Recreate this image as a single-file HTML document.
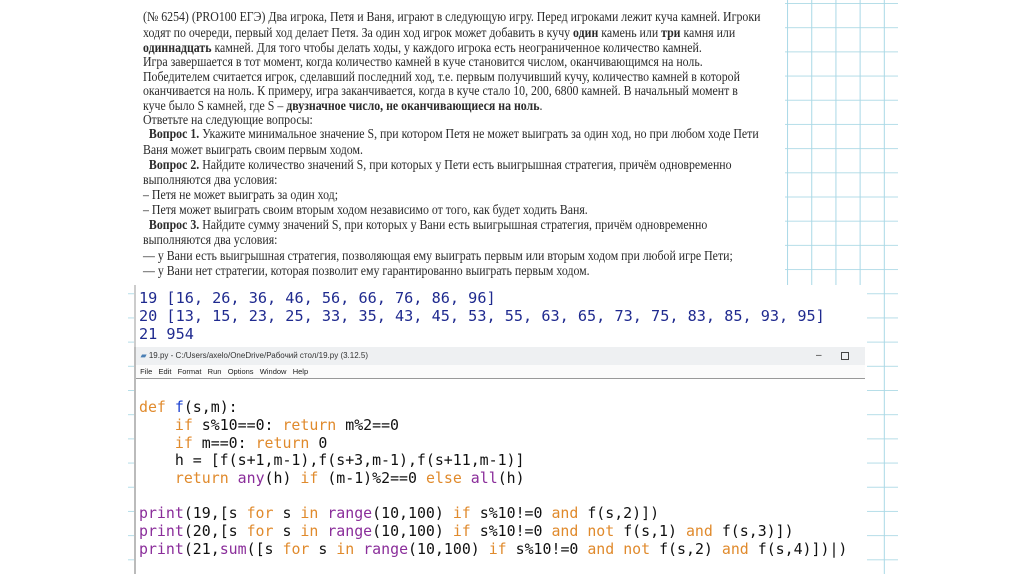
<!DOCTYPE html>
<html><head><meta charset="utf-8"><style>
body{margin:0;width:1024px;height:574px;background:#fff;position:relative;overflow:hidden;font-family:"Liberation Serif","DejaVu Serif",serif}
.grid{position:absolute;left:128px;top:0;width:770px;height:574px;
background-image:linear-gradient(to right,#a9d8e6 1px,transparent 1px),linear-gradient(to bottom,#b5dde8 1px,transparent 1px);
background-size:24.2px 24.2px;background-position:6px 3px}
.doc{position:absolute;left:128px;top:0;width:657px;height:285px;background:#fff}
.l{position:absolute;left:143px;font-size:13.4px;color:#2a2a2a;white-space:nowrap;line-height:15px;transform:scaleX(0.885);transform-origin:0 0}
.shell{position:absolute;left:134px;top:285px;width:731px;height:62px;background:#fff;border-left:2px solid #ccc}
.sh{position:absolute;left:139px;font-family:"DejaVu Sans Mono","Liberation Mono",monospace;font-size:15.2px;color:#1f2a8f;white-space:nowrap;line-height:18px}
.win{position:absolute;left:134px;top:347px;width:731px;height:227px;background:#fff;border-left:2px solid #bbb}
.tb{position:absolute;left:0;top:0;width:729px;height:18px;background:#eef0f2;font-family:"Liberation Sans",sans-serif;font-size:8px;color:#333;line-height:18px}
.mb{position:absolute;left:0;top:18px;width:729px;height:13px;font-family:"Liberation Sans",sans-serif;font-size:7.5px;color:#222;line-height:13px;border-bottom:1px solid #999;background:#fbfbfb}
.c{position:absolute;left:139px;font-family:"DejaVu Sans Mono","Liberation Mono",monospace;font-size:14.9px;color:#111;white-space:pre;line-height:17px}
.k{color:#e08a2c}.b{color:#8a2d9a}
</style></head><body>
<div class="grid"></div>
<div class="doc"></div>
<div class="l" style="top:9px">(№ 6254) (PRO100 ЕГЭ) Два игрока, Петя и Ваня, играют в следующую игру. Перед игроками лежит куча камней. Игроки</div>
<div class="l" style="top:25px">ходят по очереди, первый ход делает Петя. За один ход игрок может добавить в кучу <b>один</b> камень или <b>три</b> камня или</div>
<div class="l" style="top:40px"><b>одиннадцать</b> камней. Для того чтобы делать ходы, у каждого игрока есть неограниченное количество камней.</div>
<div class="l" style="top:54px">Игра завершается в тот момент, когда количество камней в куче становится числом, оканчивающимся на ноль.</div>
<div class="l" style="top:69px">Победителем считается игрок, сделавший последний ход, т.е. первым получивший кучу, количество камней в которой</div>
<div class="l" style="top:83px">оканчивается на ноль. К примеру, игра заканчивается, когда в куче стало 10, 200, 6800 камней. В начальный момент в</div>
<div class="l" style="top:98px">куче было S камней, где S – <b>двузначное число, не оканчивающиеся на ноль</b>.</div>
<div class="l" style="top:112px">Ответьте на следующие вопросы:</div>
<div class="l" style="top:126px">&nbsp;&nbsp;<b>Вопрос 1.</b> Укажите минимальное значение S, при котором Петя не может выиграть за один ход, но при любом ходе Пети</div>
<div class="l" style="top:142px">Ваня может выиграть своим первым ходом.</div>
<div class="l" style="top:157px">&nbsp;&nbsp;<b>Вопрос 2.</b> Найдите количество значений S, при которых у Пети есть выигрышная стратегия, причём одновременно</div>
<div class="l" style="top:172px">выполняются два условия:</div>
<div class="l" style="top:187px">– Петя не может выиграть за один ход;</div>
<div class="l" style="top:202px">– Петя может выиграть своим вторым ходом независимо от того, как будет ходить Ваня.</div>
<div class="l" style="top:217px">&nbsp;&nbsp;<b>Вопрос 3.</b> Найдите сумму значений S, при которых у Вани есть выигрышная стратегия, причём одновременно</div>
<div class="l" style="top:232px">выполняются два условия:</div>
<div class="l" style="top:248px">— у Вани есть выигрышная стратегия, позволяющая ему выиграть первым или вторым ходом при любой игре Пети;</div>
<div class="l" style="top:263px">— у Вани нет стратегии, которая позволит ему гарантированно выиграть первым ходом.</div>
<div class="shell"></div>
<div class="sh" style="top:289px">19 [16, 26, 36, 46, 56, 66, 76, 86, 96]</div>
<div class="sh" style="top:307px">20 [13, 15, 23, 25, 33, 35, 43, 45, 53, 55, 63, 65, 73, 75, 83, 85, 93, 95]</div>
<div class="sh" style="top:325px">21 954</div>
<div class="win">
<div class="tb">&nbsp;&nbsp;<span style="color:#4a7fb5">▰</span> 19.py - C:/Users/axelo/OneDrive/Рабочий стол/19.py (3.12.5)<span style="position:absolute;left:680px;font-size:10px">–</span><span style="position:absolute;left:705px;top:5px;width:6px;height:6px;border:1px solid #444;line-height:0"></span></div>
<div class="mb">&nbsp;&nbsp;File&nbsp;&nbsp; Edit&nbsp;&nbsp; Format&nbsp;&nbsp; Run&nbsp;&nbsp; Options&nbsp;&nbsp; Window&nbsp;&nbsp; Help</div>
</div>
<div class="c" style="top:399px"><span class="k">def</span> <span style="color:#1a3fd0">f</span>(s,m):</div>
<div class="c" style="top:417px">    <span class="k">if</span> s%10==0: <span class="k">return</span> m%2==0</div>
<div class="c" style="top:435px">    <span class="k">if</span> m==0: <span class="k">return</span> 0</div>
<div class="c" style="top:452px">    h = [f(s+1,m-1),f(s+3,m-1),f(s+11,m-1)]</div>
<div class="c" style="top:470px">    <span class="k">return</span> <span class="b">any</span>(h) <span class="k">if</span> (m-1)%2==0 <span class="k">else</span> <span class="b">all</span>(h)</div>
<div class="c" style="top:505px"><span class="b">print</span>(19,[s <span class="k">for</span> s <span class="k">in</span> <span class="b">range</span>(10,100) <span class="k">if</span> s%10!=0 <span class="k">and</span> f(s,2)])</div>
<div class="c" style="top:523px"><span class="b">print</span>(20,[s <span class="k">for</span> s <span class="k">in</span> <span class="b">range</span>(10,100) <span class="k">if</span> s%10!=0 <span class="k">and</span> <span class="k">not</span> f(s,1) <span class="k">and</span> f(s,3)])</div>
<div class="c" style="top:541px"><span class="b">print</span>(21,<span class="b">sum</span>([s <span class="k">for</span> s <span class="k">in</span> <span class="b">range</span>(10,100) <span class="k">if</span> s%10!=0 <span class="k">and</span> <span class="k">not</span> f(s,2) <span class="k">and</span> f(s,4)])|)</div>
</body></html>
